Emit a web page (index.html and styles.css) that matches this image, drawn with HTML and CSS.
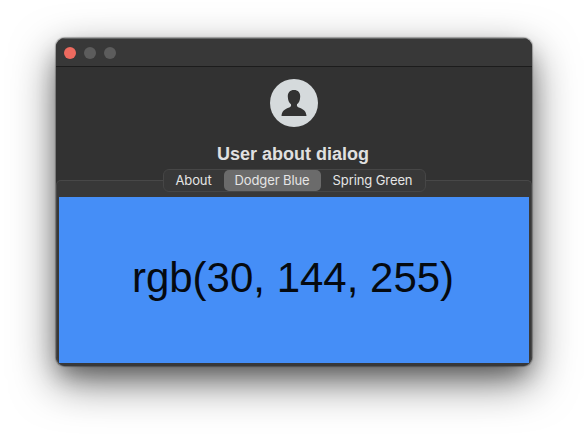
FILE: index.html
```
<!DOCTYPE html>
<html lang="en">
<head>
<meta charset="utf-8">
<title>User about dialog</title>
<link rel="stylesheet" href="styles.css">
</head>
<body>
<main class="window">
  <header class="titlebar">
    <span class="light close"></span>
    <span class="light"></span>
    <span class="light"></span>
  </header>
  <section class="intro">
    <svg class="avatar" viewBox="0 0 48 48" aria-hidden="true">
      <circle cx="24" cy="24" r="24" fill="#d5dadc"/>
      <path d="M24 11C20 11 17.8 13.6 17.8 17.4C17.8 21 19 23.6 21 25.2C21.5 27.2 20.5 28 18.5 28.8C14.8 30.2 11.8 32 11.5 37H36.5C36.2 32 33.2 30.2 29.5 28.8C27.5 28 26.500 27.2 27 25.200C29 23.600 30.200 21 30.200 17.400C30.200 13.600 28 11 24 11Z" fill="#323232"/>
    </svg>
    <h1 class="title">User about dialog</h1>
  </section>
  <section class="panel">
    <nav class="tabs">
      <span class="tab">About</span>
      <span class="tab active">Dodger Blue</span>
      <span class="tab">Spring Green</span>
    </nav>
    <div class="swatch">rgb(30, 144, 255)</div>
  </section>
</main>
</body>
</html>
```
FILE: styles.css
```
* { box-sizing: border-box; }
body {
  margin: 0;
  height: 440px;
  padding: 38px 56px 74px;
  background: #fff;
  overflow: hidden;
}
.window {
  display: flex;
  flex-direction: column;
  width: 476px;
  height: 328px;
  border-radius: 9px;
  overflow: hidden;
  background: #323232;
  box-shadow: 0 0 1px 0.5px rgba(0, 0, 0, 0.3), 0 16px 44px rgba(0, 0, 0, 0.55), 0 12px 22px -4px rgba(0, 0, 0, 0.32);
}
.titlebar {
  display: flex;
  align-items: center;
  gap: 8px;
  height: 29px;
  padding-left: 8px;
  background: #383838;
  border-top: 1px solid #626464;
  border-bottom: 1px solid #1c1c1c;
}
.light {
  width: 12px;
  height: 12px;
  border-radius: 50%;
  background: #5c5c5c;
}
.close { background: #ed6a5f; }
.intro {
  display: flex;
  flex-direction: column;
  align-items: center;
  height: 113px;
  padding-top: 12px;
}
.avatar { width: 48px; height: 48px; }
.title {
  margin: 16px 2px 0 0;
  font: bold 18px/22px "Liberation Sans", Arial, sans-serif;
  color: #e0e0e0;
  white-space: nowrap;
}
.panel {
  display: flex;
  flex-direction: column;
  align-items: center;
  height: 186px;
  padding: 0 2px 3px;
  background: #383838;
  border: 1px solid #484848;
  border-bottom: 0;
  border-radius: 5px 5px 9px 9px;
}
.tabs {
  display: grid;
  grid-template-columns: 60px 97px 104px;
  width: 263px;
  height: 23px;
  margin: -12px 0 5px;
  flex: none;
  background: #383838;
  border: 1px solid #464646;
  border-radius: 6px;
}
.tab {
  height: 21px;
  border-radius: 5px;
  text-align: center;
  font: 13px/21px Inter, sans-serif;
  letter-spacing: -0.1px;
  color: #e5e5e5;
  white-space: nowrap;
}
.active { background: #6b6b6b; }
.swatch {
  display: flex;
  align-items: center;
  justify-content: center;
  flex: 1;
  width: 470px;
  padding: 0 2px 5px 0;
  background: #458ef7;
  font: 42px/48px "Liberation Sans", Arial, sans-serif;
  color: #050a10;
}
```
